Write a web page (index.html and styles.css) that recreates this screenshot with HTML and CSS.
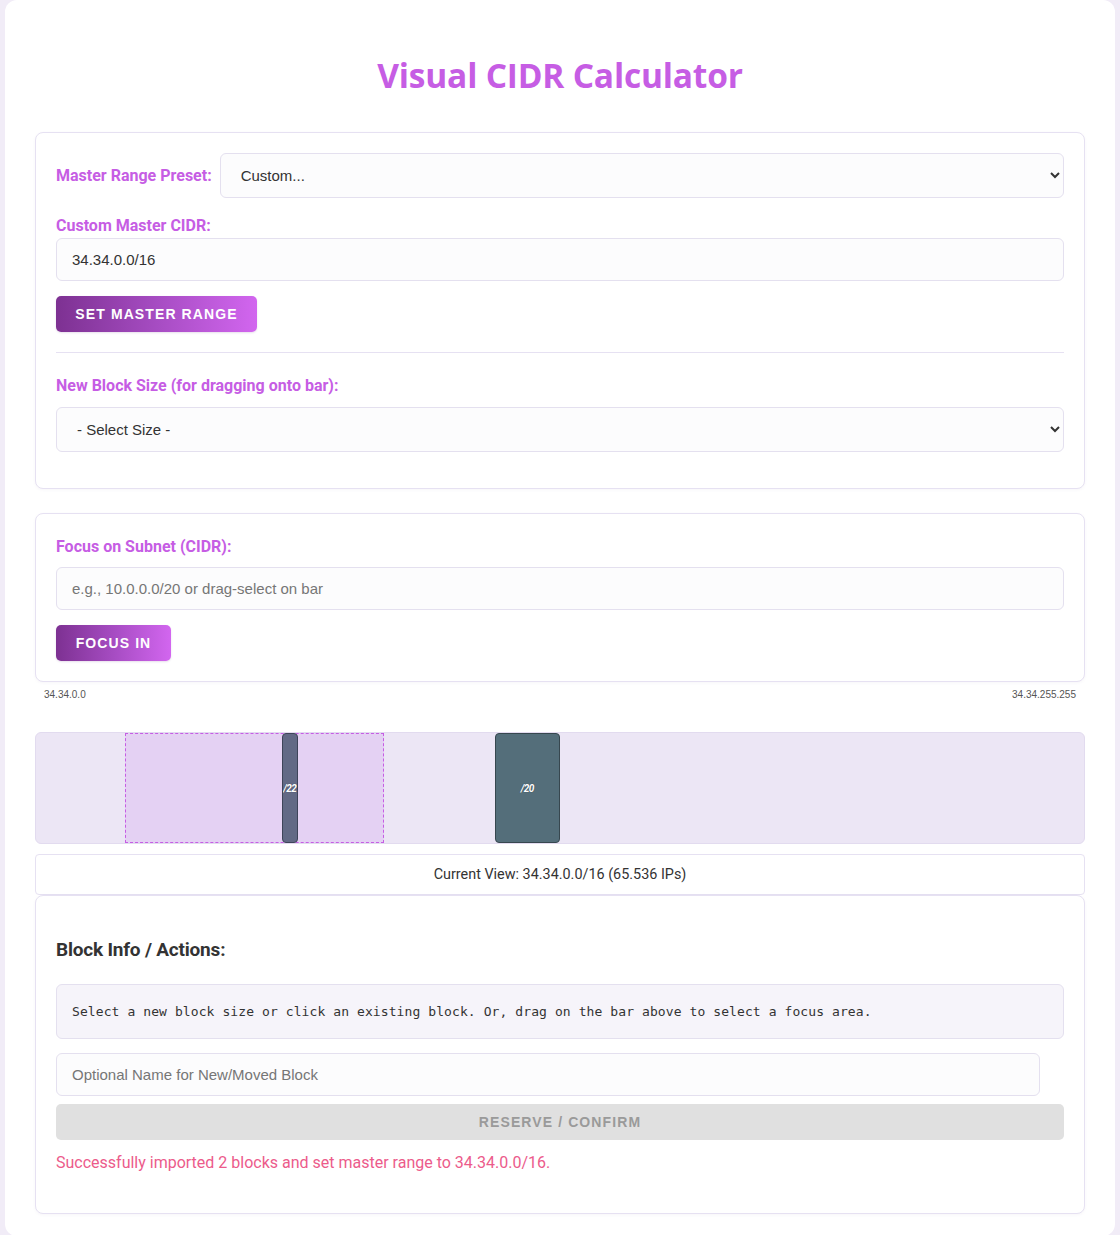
FILE: index.html
```html
<!DOCTYPE html>
<html lang="en">
<head>
<meta charset="utf-8">
<title>Visual CIDR Calculator</title>
<link rel="stylesheet" href="styles.css">
</head>
<body>
<div class="container">
  <h1 class="title">Visual CIDR Calculator</h1>

  <section class="card card-master">
    <div class="preset-row">
      <label class="label label-inline" for="preset">Master Range Preset:</label>
      <select id="preset" class="field select">
        <option>Custom...</option>
      </select>
    </div>
    <label class="label label-block" for="master">Custom Master CIDR:</label>
    <input id="master" class="field input" type="text" value="34.34.0.0/16">
    <button class="btn btn-primary btn-set">Set Master Range</button>
    <hr class="divider">
    <label class="label label-block label-size" for="size">New Block Size (for dragging onto bar):</label>
    <select id="size" class="field select select-size">
      <option>- Select Size -</option>
    </select>
  </section>

  <section class="card card-focus">
    <label class="label label-block label-focus" for="focus">Focus on Subnet (CIDR):</label>
    <input id="focus" class="field input" type="text" placeholder="e.g., 10.0.0.0/20 or drag-select on bar">
    <button class="btn btn-primary btn-focus">Focus In</button>
  </section>

  <div class="range-labels">
    <span>34.34.0.0</span>
    <span>34.34.255.255</span>
  </div>

  <div class="bar">
    <div class="focus-area" style="left:8.49%;width:24.71%"></div>
    <div class="block block-22" style="left:23.4375%;width:1.5625%"><span>/22</span></div>
    <div class="block block-20" style="left:43.75%;width:6.25%"><span>/20</span></div>
  </div>

  <div class="current-view">Current View: 34.34.0.0/16 (65.536 IPs)</div>

  <section class="card card-info">
    <h3 class="info-heading">Block Info / Actions:</h3>
    <div class="info-box">Select a new block size or click an existing block. Or, drag on the bar above to select a focus area.</div>
    <input class="field input input-name" type="text" placeholder="Optional Name for New/Moved Block">
    <button class="btn btn-disabled">Reserve / Confirm</button>
    <p class="message">Successfully imported 2 blocks and set master range to 34.34.0.0/16.</p>
  </section>
</div>
</body>
</html>
```

FILE: styles.css
```css
* { box-sizing: border-box; }

html, body {
  margin: 0;
  padding: 0;
  background: #f1ecf7;
}

body {
  padding: 0 5px;
  font-family: Roboto, "Liberation Sans", Arial, sans-serif;
  color: #333;
}

.container {
  background: #fff;
  border-radius: 12px;
  padding: 54px 30px 22px;
  min-height: 1235px;
}

.title {
  margin: 0 0 36px;
  text-align: center;
  font-family: "Open Sans", Lato, sans-serif;
  font-weight: 700;
  font-size: 33.5px;
  line-height: 42px;
  color: #c65de4;
  letter-spacing: -0.2px;
}

.card {
  border: 1px solid #e6e1f2;
  border-radius: 8px;
  background: #fff;
  box-shadow: 0 1px 3px rgba(120, 100, 160, 0.06);
}

.card-master {
  padding: 20px 20px 36px;
}

.preset-row {
  display: flex;
  align-items: center;
  gap: 8px;
}

.label {
  font-family: Roboto, "Liberation Sans", sans-serif;
  font-weight: 700;
  font-size: 16px;
  line-height: 19px;
  color: #c65de4;
}

.label-inline {
  white-space: nowrap;
}

.label-block {
  display: block;
  margin: 18px 0 3px;
}

.label-size {
  margin-top: 23px;
  margin-bottom: 12px;
}

.field {
  display: block;
  width: 100%;
  border: 1px solid #e4e0ef;
  border-radius: 6px;
  background: #fcfcfd;
  font-family: "Liberation Sans", Arial, sans-serif;
  font-size: 15px;
  color: #333;
  outline: none;
}

.select {
  height: 45px;
  padding: 0 12px 0 16px;
  flex: 1;
}

.input {
  height: 43px;
  padding: 0 15px;
}

.input::placeholder {
  color: #767676;
}

.btn {
  display: block;
  border: none;
  border-radius: 5px;
  font-family: "Liberation Sans", Arial, sans-serif;
  font-weight: 700;
  font-size: 14px;
  letter-spacing: 1.1px;
  text-transform: uppercase;
  white-space: nowrap;
  height: 36px;
  padding: 0;
  cursor: pointer;
}

.btn-primary {
  color: #fff;
  background: linear-gradient(90deg, #7d3192 0%, #a64cc2 50%, #d266ef 100%);
  box-shadow: 0 1px 2px rgba(100, 40, 130, 0.15);
}

.btn-set {
  margin-top: 15px;
  width: 201px;
}

.btn-focus {
  margin-top: 15px;
  width: 115px;
}

.divider {
  border: none;
  border-top: 1px solid #e6e1f2;
  margin: 20px 0 0;
}

.card-focus {
  margin-top: 24px;
  padding: 20px 20px 20px;
}

.label-focus {
  margin-top: 3px;
  margin-bottom: 11px;
}

.range-labels {
  display: flex;
  justify-content: space-between;
  padding: 7px 9px 0 9px;
  height: 50px;
  font-family: "Liberation Sans", Arial, sans-serif;
  font-size: 10px;
  line-height: 12px;
  color: #555;
}

.bar {
  position: relative;
  height: 112px;
  background: #ece6f5;
  border: 1px solid #e2dbef;
  border-radius: 6px;
}

.focus-area {
  position: absolute;
  top: 0;
  bottom: 0;
  background: rgba(214, 170, 240, 0.35);
  border: 1px dashed #c65de4;
}

.block {
  position: absolute;
  top: 0;
  bottom: 0;
  border-radius: 4px;
  display: flex;
  align-items: center;
  justify-content: center;
  overflow: hidden;
}

.block span {
  font-family: Roboto, "Liberation Sans", sans-serif;
  font-size: 10px;
  font-weight: 700;
  font-style: italic;
  color: #fff;
  letter-spacing: -0.5px;
  text-shadow: 0 0 1px rgba(0, 0, 0, 0.4);
}

.block-22 {
  background: #626985;
  border: 1px solid #3e4459;
}

.block-20 {
  background: #546e7a;
  border: 1px solid #37474f;
}

.current-view {
  margin-top: 10px;
  height: 41px;
  border: 1px solid #e6e1f2;
  border-radius: 4px;
  display: flex;
  align-items: center;
  justify-content: center;
  font-size: 14.4px;
  color: #333;
}

.card-info {
  padding: 20px 20px 20px;
  border-radius: 8px;
}

.info-heading {
  margin: 22px 0 22px;
  font-family: Roboto, "Liberation Sans", sans-serif;
  font-weight: 700;
  font-size: 19px;
  line-height: 24px;
  color: #333;
  letter-spacing: -0.2px;
}

.info-box {
  background: #f6f4fa;
  border: 1px solid #e4e0ef;
  border-radius: 6px;
  padding: 19px 15px;
  font-family: "DejaVu Sans Mono", "Liberation Mono", monospace;
  font-size: 13px;
  letter-spacing: 0.09px;
  line-height: 15px;
  color: #333;
}

.input-name {
  margin-top: 14px;
  width: calc(100% - 24px);
}

.btn-disabled {
  margin-top: 8px;
  width: 100%;
  background: #e0e0e0;
  color: #9a9a9a;
  cursor: default;
}

.message {
  margin: 13px 0 20px;
  font-size: 16px;
  line-height: 20px;
  color: #ec5b8b;
}
```
